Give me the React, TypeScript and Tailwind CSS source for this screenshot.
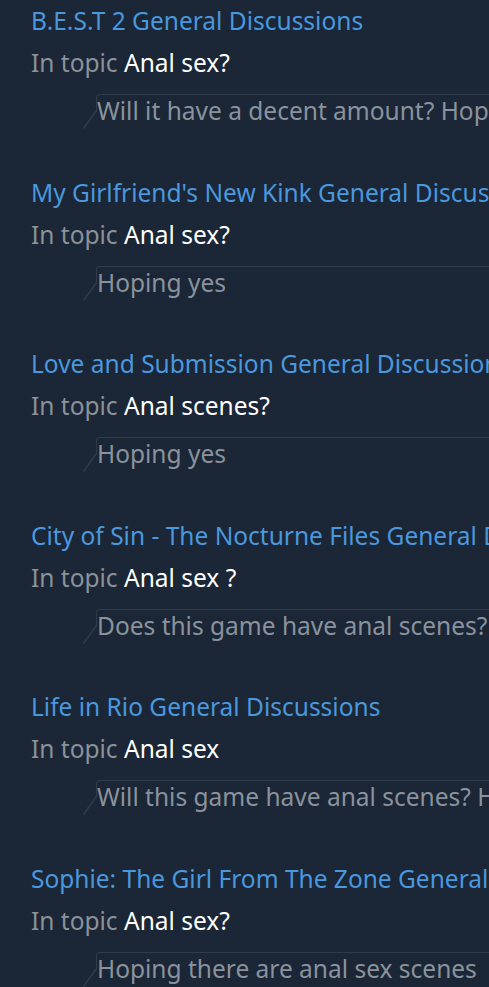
const items = [
  { game: 'B.E.S.T 2 General Discussions', topic: 'Anal sex?', comment: 'Will it have a decent amount? Hoping so' },
  { game: "My Girlfriend's New Kink General Discussions", topic: 'Anal sex?', comment: 'Hoping yes' },
  { game: 'Love and Submission General Discussions', topic: 'Anal scenes?', comment: 'Hoping yes' },
  { game: 'City of Sin - The Nocturne Files General Discussions', topic: 'Anal sex ?', comment: 'Does this game have anal scenes?' },
  { game: 'Life in Rio General Discussions', topic: 'Anal sex', comment: 'Will this game have anal scenes? Hoping so' },
  { game: 'Sophie: The Girl From The Zone General Discussions', topic: 'Anal sex?', comment: 'Hoping there are anal sex scenes' },
];

const App = () => {
  return (
    <div className="h-screen w-full overflow-hidden bg-[#1b2636] font-['Noto_Sans',sans-serif] text-[24.5px]">
      <div className="pl-[31px] pt-[5px]">
        {items.map((it, i) => (
          <div key={i} className="pb-[49.6px] whitespace-nowrap">
            <div className="leading-[32px] text-[#4a98de]">{it.game}</div>
            <div className="mt-[10px] leading-[32px] text-[#8b9299]">
              In topic <span className="text-white">{it.topic}</span>
            </div>
            <div className="relative ml-[65px] mt-[15px]">
              <div className="absolute left-0 right-0 top-0 h-[18px] rounded-tl-[4px] border-l-[1.5px] border-t-[1.5px] border-[#323c48]" />
              <svg className="absolute left-[-14px] top-[16px]" width="16" height="20" viewBox="0 0 16 20">
                <path d="M14.75 0 L1.5 18.5" stroke="#323c48" strokeWidth="1.5" fill="none" />
              </svg>
              <div className="pl-[1px] pt-[1px] leading-[32px] text-[#8a939d]">{it.comment}</div>
            </div>
          </div>
        ))}
      </div>
    </div>
  );
};

export default App;
